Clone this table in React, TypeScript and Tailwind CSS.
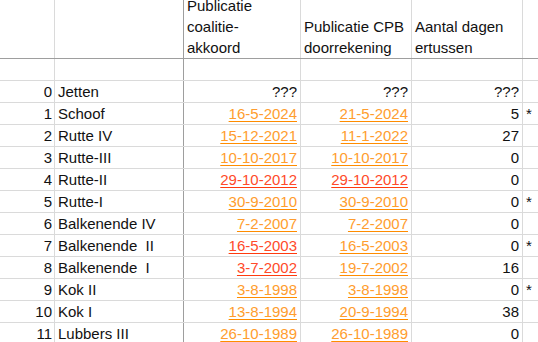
type Cell = { text: string; red?: boolean };

type Row = {
  n: number;
  name: string;
  coal: Cell | null;
  cpb: Cell | null;
  days: string;
  star?: boolean;
};

const rows: Row[] = [
  { n: 0, name: "Jetten", coal: null, cpb: null, days: "???" },
  { n: 1, name: "Schoof", coal: { text: "16-5-2024" }, cpb: { text: "21-5-2024" }, days: "5", star: true },
  { n: 2, name: "Rutte IV", coal: { text: "15-12-2021" }, cpb: { text: "11-1-2022" }, days: "27" },
  { n: 3, name: "Rutte-III", coal: { text: "10-10-2017" }, cpb: { text: "10-10-2017" }, days: "0" },
  { n: 4, name: "Rutte-II", coal: { text: "29-10-2012", red: true }, cpb: { text: "29-10-2012", red: true }, days: "0" },
  { n: 5, name: "Rutte-I", coal: { text: "30-9-2010" }, cpb: { text: "30-9-2010" }, days: "0", star: true },
  { n: 6, name: "Balkenende IV", coal: { text: "7-2-2007" }, cpb: { text: "7-2-2007" }, days: "0" },
  { n: 7, name: "Balkenende  II", coal: { text: "16-5-2003", red: true }, cpb: { text: "16-5-2003" }, days: "0", star: true },
  { n: 8, name: "Balkenende  I", coal: { text: "3-7-2002", red: true }, cpb: { text: "19-7-2002" }, days: "16" },
  { n: 9, name: "Kok II", coal: { text: "3-8-1998" }, cpb: { text: "3-8-1998" }, days: "0", star: true },
  { n: 10, name: "Kok I", coal: { text: "13-8-1994" }, cpb: { text: "20-9-1994" }, days: "38" },
  { n: 11, name: "Lubbers III", coal: { text: "26-10-1989" }, cpb: { text: "26-10-1989" }, days: "0" },
];

const DateCell = ({ cell, fallback }: { cell: Cell | null; fallback?: string }) => {
  if (!cell) return <span className="text-[#111]">{fallback}</span>;
  return (
    <span
      className={
        cell.red
          ? "text-[#ff4a2a] underline decoration-[#ff3b0f] underline-offset-[2px]"
          : "text-[#ff9d2e] underline decoration-[#ff8c00] underline-offset-[2px]"
      }
    >
      {cell.text}
    </span>
  );
};

const App = () => {
  return (
    <div
      className="h-[342px] w-[538px] overflow-hidden bg-white text-[15px] text-[#111]"
      style={{ fontFamily: '"Liberation Sans", Arial, sans-serif' }}
    >
      {/* header */}
      <div className="flex h-[59px] border-b border-[#9e9e9e] leading-[21px]">
        <div className="w-[55px] border-r border-[#dadada]" />
        <div className="w-[129px] border-r border-[#9e9e9e]" />
        <div className="flex w-[117px] flex-col justify-end overflow-hidden border-r border-[#dadada] pl-[3px]">
          <div>Publicatie</div>
          <div>coalitie-</div>
          <div>akkoord</div>
        </div>
        <div className="flex w-[111px] flex-col justify-end overflow-hidden border-r border-[#dadada] pl-[3px]">
          <div>Publicatie CPB</div>
          <div>doorrekening</div>
        </div>
        <div className="flex w-[111px] flex-col justify-end overflow-hidden border-r border-[#dadada] pl-[3px]">
          <div>Aantal dagen</div>
          <div>ertussen</div>
        </div>
        <div className="flex-1" />
      </div>

      {/* empty row */}
      <div className="flex h-[22px] border-b border-[#dadada]">
        <div className="w-[55px] border-r border-[#dadada]" />
        <div className="w-[129px] border-r border-[#9e9e9e]" />
        <div className="w-[117px] border-r border-[#dadada]" />
        <div className="w-[111px] border-r border-[#dadada]" />
        <div className="w-[111px] border-r border-[#dadada]" />
        <div className="flex-1" />
      </div>

      {rows.map((r) => (
        <div key={r.n} className="flex h-[22px] border-b border-[#dadada] leading-[21px]">
          <div className="w-[55px] border-r border-[#dadada] pr-[2px] text-right">{r.n}</div>
          <div className="w-[129px] whitespace-pre border-r border-[#9e9e9e] pl-[3px]">{r.name}</div>
          <div className="w-[117px] border-r border-[#dadada] pr-[3px] text-right">
            <DateCell cell={r.coal} fallback="???" />
          </div>
          <div className="w-[111px] border-r border-[#dadada] pr-[3px] text-right">
            <DateCell cell={r.cpb} fallback="???" />
          </div>
          <div className="w-[111px] border-r border-[#dadada] pr-[3px] text-right">{r.days}</div>
          <div className="flex-1 pl-[3px]">{r.star ? "*" : ""}</div>
        </div>
      ))}
    </div>
  );
};

export default App;
